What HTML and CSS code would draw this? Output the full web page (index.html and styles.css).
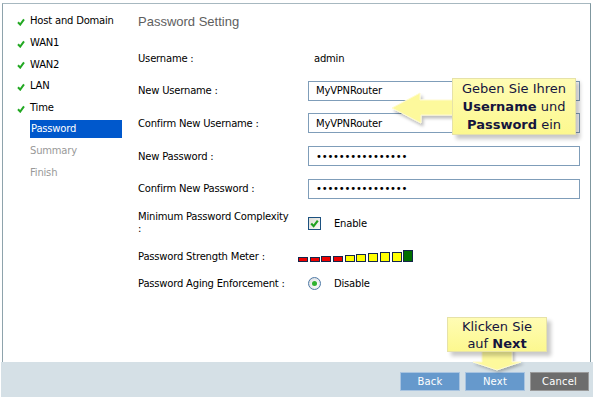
FILE: index.html
```html
<!DOCTYPE html>
<html lang="de">
<head>
    <meta charset="UTF-8">
    <title>Setup Wizard - Password Setting</title>
    <link rel="stylesheet" href="styles.css">
</head>
<body>
    <div class="page">
        <div class="wizard">
            <!-- Schritte -->
            <ul class="steps">
                <li class="done"><svg class="tick" viewBox="0 0 8 8"><path d="M1 4.3 L3.2 6.6 L7 1.4"/></svg>Host and Domain</li>
                <li class="done"><svg class="tick" viewBox="0 0 8 8"><path d="M1 4.3 L3.2 6.6 L7 1.4"/></svg>WAN1</li>
                <li class="done"><svg class="tick" viewBox="0 0 8 8"><path d="M1 4.3 L3.2 6.6 L7 1.4"/></svg>WAN2</li>
                <li class="done"><svg class="tick" viewBox="0 0 8 8"><path d="M1 4.3 L3.2 6.6 L7 1.4"/></svg>LAN</li>
                <li class="done"><svg class="tick" viewBox="0 0 8 8"><path d="M1 4.3 L3.2 6.6 L7 1.4"/></svg>Time</li>
                <li class="current"><span>Password</span></li>
                <li class="todo">Summary</li>
                <li class="todo">Finish</li>
            </ul>

            <div class="content">
                <h1>Password Setting</h1>

                <div class="form">
                    <div class="label">Username :</div>
                    <div class="value">admin</div>

                    <div class="label">New Username :</div>
                    <input type="text" value="MyVPNRouter">

                    <div class="label">Confirm New Username :</div>
                    <input type="text" value="MyVPNRouter">

                    <div class="label">New Password :</div>
                    <input type="password" value="mypassword123456">

                    <div class="label">Confirm New Password :</div>
                    <input type="password" value="mypassword123456">

                    <div class="label two-lines">Minimum Password Complexity<br>:</div>
                    <div class="option">
                        <span class="checkbox"><svg viewBox="0 0 10 10"><path d="M2 5 L4.2 7.4 L8 2.4"/></svg></span>
                        Enable
                    </div>

                    <div class="label">Password Strength Meter :</div>
                    <div class="meter">
                        <span class="bar red" style="height: 5px"></span>
                        <span class="bar red" style="height: 5px"></span>
                        <span class="bar red" style="height: 6px"></span>
                        <span class="bar red" style="height: 6px"></span>
                        <span class="bar yellow" style="height: 7px"></span>
                        <span class="bar yellow" style="height: 8px"></span>
                        <span class="bar yellow" style="height: 9px"></span>
                        <span class="bar yellow" style="height: 10px"></span>
                        <span class="bar yellow" style="height: 10px"></span>
                        <span class="bar green" style="height: 12px"></span>
                    </div>

                    <div class="label">Password Aging Enforcement :</div>
                    <div class="option">
                        <span class="radio"><span class="dot"></span></span>
                        Disable
                    </div>
                </div>
            </div>
        </div>

        <div class="footer">
            <button class="btn">Back</button>
            <button class="btn">Next</button>
            <button class="btn cancel">Cancel</button>
        </div>

        <!-- Hinweise -->
        <svg class="arrow arrow-left" width="72" height="46" viewBox="0 0 72 46">
            <defs>
                <filter id="shadow1" x="-20%" y="-20%" width="150%" height="160%">
                    <feDropShadow dx="2" dy="3" stdDeviation="1.5" flood-color="#000" flood-opacity="0.25"/>
                </filter>
            </defs>
            <polygon points="4,20 32,5 32,12 66,12 66,27 33,27 33,35" filter="url(#shadow1)"/>
        </svg>
        <div class="callout callout-user">
            Geben Sie Ihren<br>
            <b>Username</b> und<br>
            <b>Password</b> ein
        </div>

        <svg class="arrow arrow-down" width="62" height="32" viewBox="0 0 62 32">
            <defs>
                <filter id="shadow2" x="-20%" y="-20%" width="150%" height="170%">
                    <feDropShadow dx="2" dy="2" stdDeviation="1.5" flood-color="#000" flood-opacity="0.25"/>
                </filter>
            </defs>
            <polygon points="14,2 44,2 44,15 53,15 29,23 5,15 14,15" filter="url(#shadow2)"/>
        </svg>
        <div class="callout callout-next">
            Klicken Sie<br>
            auf <b>Next</b>
        </div>
    </div>
</body>
</html>
```

FILE: styles.css
```css
html, body {
    margin: 0;
    padding: 0;
}

body {
    font-family: "DejaVu Sans", Verdana, sans-serif;
    font-size: 10px;
    color: #000;
    background-color: #fff;
    width: 593px;
    height: 397px;
    overflow: hidden;
}

.page {
    position: relative;
    height: 397px;
    padding-top: 3px;
    box-sizing: border-box;
    display: flex;
    flex-direction: column;
}

.wizard {
    flex: 1;
    display: flex;
    margin: 0 2px;
    border: 1px solid #a7b8c0;
    border-left-color: #8ea3ac;
    border-right-color: #7f979f;
    border-bottom: none;
}

/* Schritte links */
.steps {
    list-style: none;
    margin: 0;
    padding: 6px 0 0 14px;
    width: 135px;
    box-sizing: border-box;
    letter-spacing: -0.2px;
}

.steps li {
    height: 21.7px;
    display: flex;
    align-items: center;
}

.tick {
    width: 8px;
    height: 8px;
    margin-right: 5px;
    margin-top: 2px;
}

.tick path {
    fill: none;
    stroke: #22a822;
    stroke-width: 2;
}

.steps .todo,
.steps .current {
    padding-left: 13px;
}

.steps .todo {
    color: #999;
}

.steps .current span {
    display: block;
    width: 92px;
    height: 18px;
    line-height: 18px;
    padding-left: 1px;
    box-sizing: border-box;
    background-color: #0058cc;
    color: #fff;
}

/* Formular */
.content {
    flex: 1;
    padding: 10px 10px 0 0;
}

h1 {
    margin: 0;
    font-family: "Liberation Sans", Arial, sans-serif;
    font-size: 13px;
    font-weight: normal;
    line-height: 15px;
    color: #5e5e5e;
}

.form {
    margin-top: 19px;
    display: grid;
    grid-template-columns: 170px 1fr;
    grid-template-rows: 20px 20px 20px 20px 20px 24px 16px 13px;
    row-gap: 12.7px;
    align-items: center;
    letter-spacing: -0.2px;
}

.label.two-lines {
    line-height: 12px;
}

.value {
    padding-left: 6px;
}

input {
    width: 100%;
    height: 20px;
    box-sizing: border-box;
    border: 1px solid #7f9db9;
    padding: 0 7px;
    margin: 0;
    font-family: "DejaVu Sans", Verdana, sans-serif;
    font-size: 10px;
    letter-spacing: -0.2px;
    color: #000;
    background-color: #fff;
    outline: none;
}

.option {
    display: flex;
    align-items: center;
    gap: 13px;
}

.checkbox {
    width: 13px;
    height: 13px;
    box-sizing: border-box;
    border: 1px solid #1c5180;
    background: linear-gradient(135deg, #dcdcd5, #fafaf8);
    display: flex;
}

.checkbox svg {
    width: 11px;
    height: 11px;
}

.checkbox path {
    fill: none;
    stroke: #21a121;
    stroke-width: 2;
}

.radio {
    width: 13px;
    height: 13px;
    box-sizing: border-box;
    border: 1px solid #4f7aa6;
    border-radius: 50%;
    background: radial-gradient(circle at 60% 60%, #ffffff, #d4d8dc);
    display: flex;
    align-items: center;
    justify-content: center;
}

.radio .dot {
    width: 5px;
    height: 5px;
    border-radius: 50%;
    background-color: #2fb22f;
}

.meter {
    display: flex;
    align-items: flex-end;
    gap: 1.7px;
    margin-left: -10px;
}

.bar {
    width: 10px;
    box-sizing: border-box;
    border: 1px solid #13254a;
}

.bar.red {
    background-color: #ee0000;
}

.bar.yellow {
    background-color: #ffff00;
}

.bar.green {
    background-color: #006e00;
}

/* Fußleiste */
.footer {
    height: 35px;
    margin-left: 1px;
    background-color: #d5e0e6;
    display: flex;
    justify-content: flex-end;
    align-items: flex-start;
    gap: 5px;
    padding: 10px 4px 0 0;
    box-sizing: border-box;
}

.btn {
    width: 60px;
    height: 19px;
    padding: 0;
    border: 1px solid #a9c4e0;
    background-color: #6699cc;
    color: #fff;
    font-family: "DejaVu Sans", Verdana, sans-serif;
    font-size: 10px;
    letter-spacing: 0.2px;
    cursor: pointer;
}

.btn.cancel {
    width: 59px;
    background-color: #6d6d6d;
    border-color: #9a9a9a;
}

/* Hinweis-Blasen */
.callout {
    position: absolute;
    box-sizing: border-box;
    text-align: center;
    font-size: 13px;
    color: #15153d;
    background: linear-gradient(#fffcb4, #fcf88f);
    border: 1px solid #e6e2a8;
    box-shadow: 4px 4px 4px rgba(0, 0, 0, 0.22);
}

.callout-user {
    left: 452px;
    top: 78px;
    width: 124px;
    height: 57px;
    line-height: 18px;
    padding-top: 1px;
}

.callout-next {
    left: 447px;
    top: 317px;
    width: 100px;
    height: 35px;
    line-height: 17px;
}

.arrow {
    position: absolute;
}

.arrow polygon {
    fill: #fdf99c;
    stroke: #fffbd0;
    stroke-width: 1;
}

.arrow-left {
    left: 388px;
    top: 88px;
}

.arrow-down {
    left: 468px;
    top: 347px;
}
```
